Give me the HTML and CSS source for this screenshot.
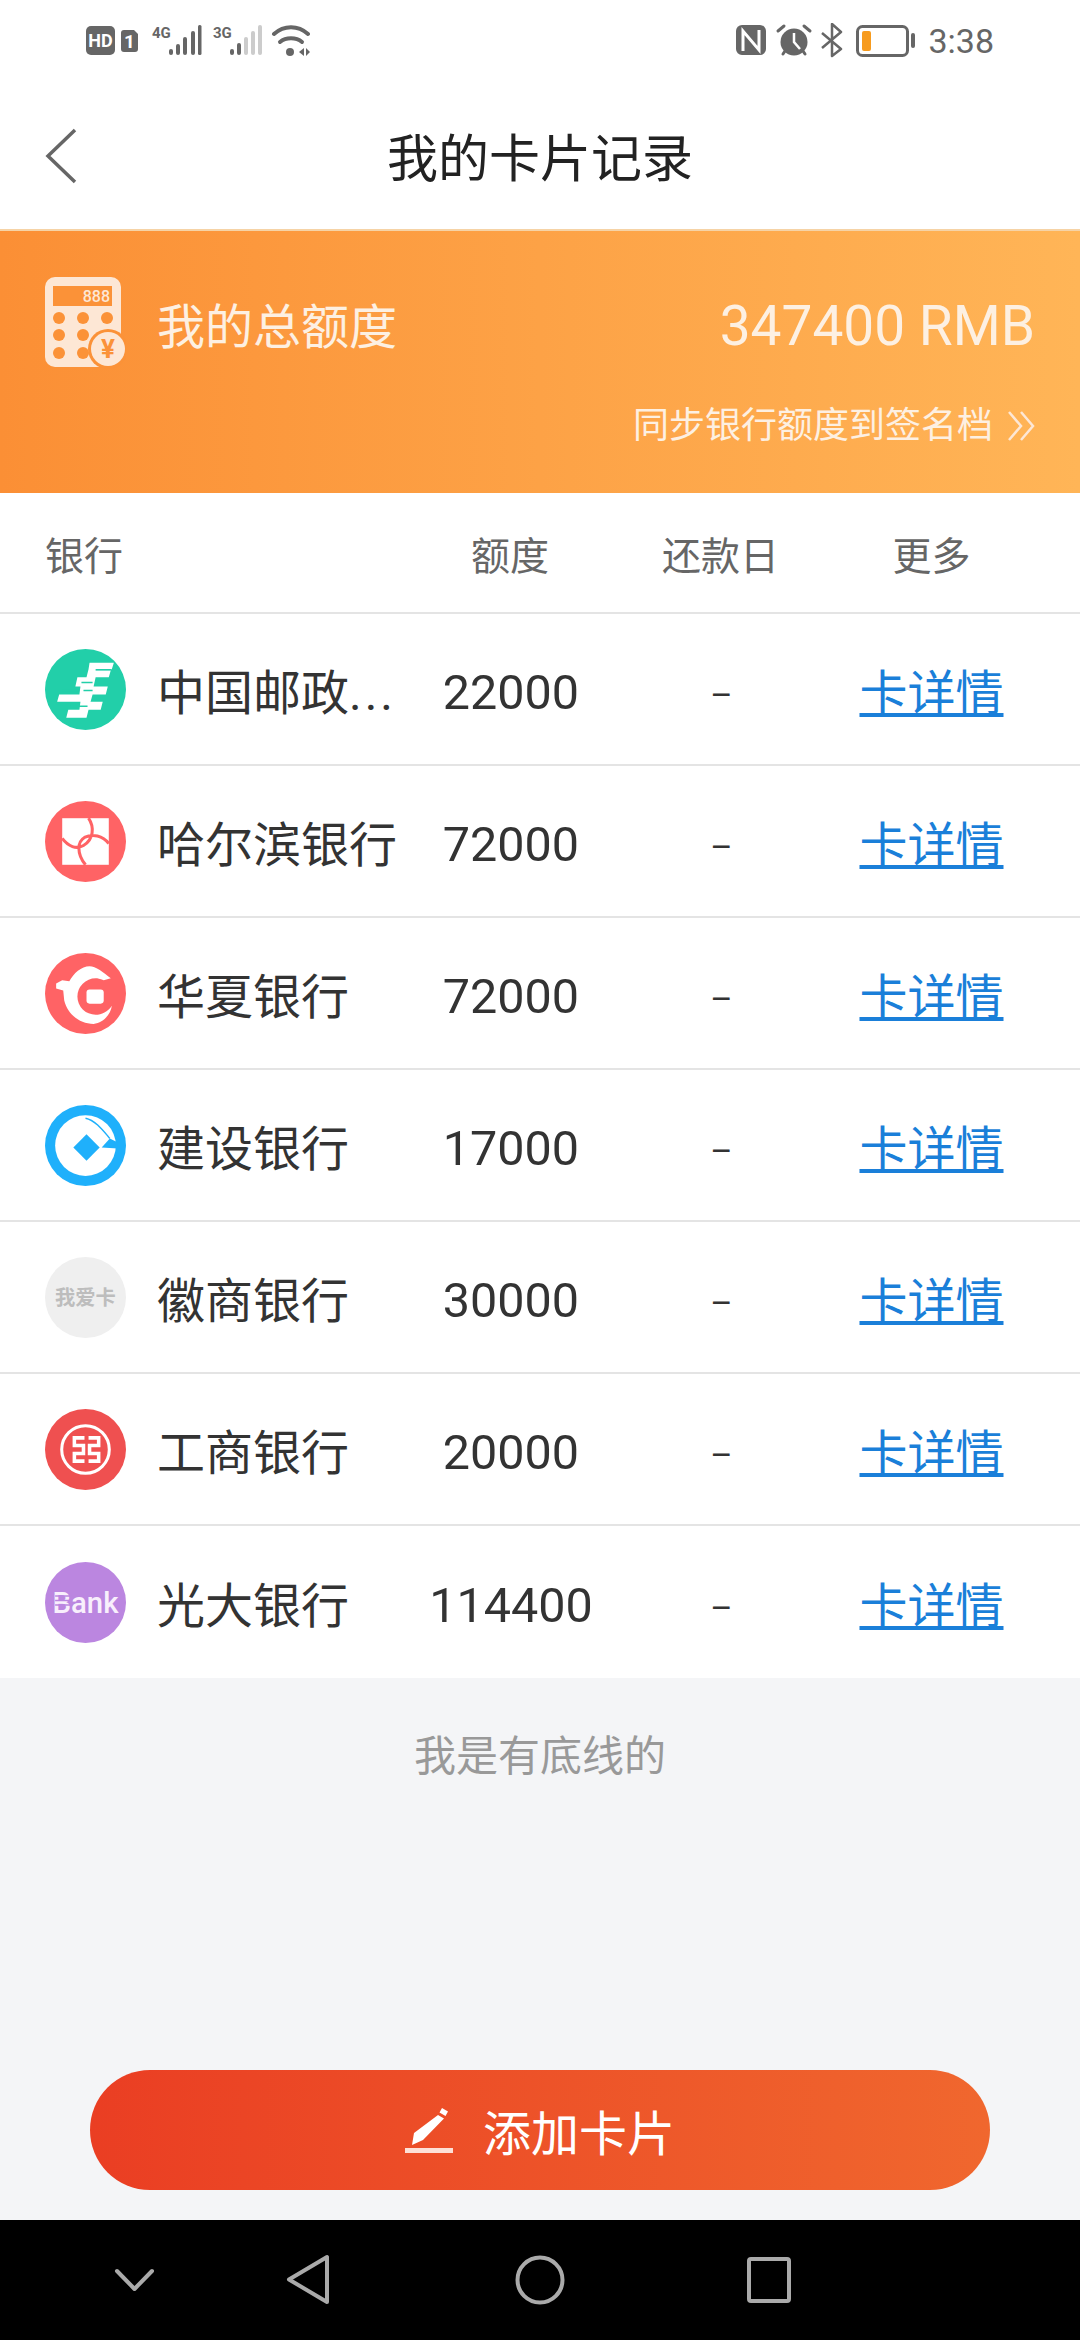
FILE: index.html
```html
<!DOCTYPE html>
<html lang="zh-CN">
<head>
  <meta charset="UTF-8">
  <meta name="viewport" content="width=device-width, initial-scale=1.0">
  <title>我的卡片记录</title>
  <link rel="stylesheet" href="styles.css">
</head>
<body>
  <div class="page">
    <div class="status-bar">
      <svg class="status-left" width="224" height="36" viewBox="86 23 224 36">
        <rect x="86" y="26" width="29" height="29" rx="5" fill="#666"/>
        <text x="100.5" y="46.500" class="st-hd">HD</text>
        <path d="M124 30h10l4 4v15a3 3 0 0 1-3 3h-11a3 3 0 0 1-3-3V33a3 3 0 0 1 3-3z" fill="#666"/>
        <text x="129.5" y="47.500" class="st-one">1</text>
        <text x="152" y="38" class="st-net">4G</text>
        <g fill="#666">
          <rect x="169" y="49" width="4" height="6" rx="2"/>
          <rect x="176" y="44" width="4" height="11" rx="2"/>
          <rect x="183" y="37" width="4" height="18" rx="2"/>
          <rect x="191" y="31" width="4" height="24" rx="2"/>
          <rect x="198" y="25" width="3.500" height="30" rx="1.500"/>
        </g>
        <text x="213" y="38" class="st-net">3G</text>
        <g fill="#666">
          <rect x="230" y="49" width="4" height="6" rx="2"/>
          <rect x="237" y="43" width="4" height="12" rx="2"/>
        </g>
        <g fill="#ccc">
          <rect x="244" y="37" width="4" height="18" rx="2"/>
          <rect x="251" y="31" width="4" height="24" rx="2"/>
          <rect x="258" y="25" width="4" height="30" rx="2"/>
        </g>
        <g fill="none" stroke="#666" stroke-width="4" stroke-linecap="round">
          <path d="M274 34c10-9 24-9 34 0"/>
          <path d="M280 42c6-5 16-5 22 0"/>
        </g>
        <circle cx="290" cy="52" r="4" fill="#666"/>
        <path d="M304 48v8l-5-4zM306 48v8l4-4z" fill="#666"/>
      </svg>
      <div class="status-right">
        <svg width="180" height="36" viewBox="737 23 180 36">
          <rect x="737" y="25" width="30" height="30" rx="6" fill="#666"/>
          <path d="M744 51V31l16 19V30" fill="none" stroke="#fff" stroke-width="3"/>
          <circle cx="795" cy="42" r="13.500" fill="#666"/>
          <path d="M795 33v9l6 7" fill="none" stroke="#fff" stroke-width="2.500"/>
          <path d="M779 31l6-5M811 31l-6-5M784 54l2-3M806 54l-2-3" stroke="#666" stroke-width="3" stroke-linecap="round"/>
          <path d="M823 33l19 16-9 7V24l9 8-19 16" fill="none" stroke="#666" stroke-width="2.500" stroke-linejoin="round"/>
          <rect x="858.500" y="26.500" width="50" height="29" rx="5" fill="#fff" stroke="#666" stroke-width="3"/>
          <rect x="863" y="31" width="9" height="20" rx="2" fill="#f79b1e"/>
          <rect x="912" y="33" width="4" height="15" rx="2" fill="#666"/>
        </svg>
        <span class="status-time">3:38</span>
      </div>
    </div>

    <div class="header">
      <svg class="back" width="32" height="56" viewBox="0 0 32 56">
        <path d="M30 2L3 28l27 26" fill="none" stroke="#666" stroke-width="3.500"/>
      </svg>
      <h1>我的卡片记录</h1>
    </div>

    <div class="banner">
      <div class="banner-top">
        <div class="banner-title">
          <svg width="81" height="92" viewBox="45 276 81 92">
            <rect x="45" y="276" width="76" height="90" rx="10" fill="#fde7d5"/>
            <rect x="53" y="285" width="59" height="20" fill="#fb9238"/>
            <text x="110" y="301" class="calc-num">888</text>
            <g fill="#fb9238">
              <circle cx="59" cy="317" r="6"/><circle cx="83" cy="317" r="6"/><circle cx="107" cy="317" r="6"/>
              <circle cx="59" cy="334" r="6"/><circle cx="83" cy="334" r="6"/>
              <circle cx="59" cy="352" r="6"/><circle cx="83" cy="352" r="6"/>
              <circle cx="108" cy="348" r="20"/>
            </g>
            <circle cx="108" cy="348" r="17" fill="#fde7d5"/>
            <text x="108" y="357" class="calc-yen">¥</text>
          </svg>
          <span>我的总额度</span>
        </div>
        <div class="banner-amount">347400 RMB</div>
      </div>
      <div class="banner-sync">
        <span>同步银行额度到签名档</span>
        <svg width="28" height="32" viewBox="0 0 28 32">
          <path d="M2 2l12 14L2 30M14 2l12 14-12 14" fill="none" stroke="#fde7d5" stroke-width="2.500"/>
        </svg>
      </div>
    </div>

    <div class="list-head">
      <div>银行</div>
      <div class="center">额度</div>
      <div class="center">还款日</div>
      <div class="center">更多</div>
    </div>

    <div class="list">
      <div class="row">
        <div class="bank">
          <svg class="bank-icon" viewBox="0 0 80 80">
            <circle cx="40" cy="40" r="40" fill="#22cfa9"/>
            <path d="M44 13.500H68L66 20H51L50 21H65L63 28H50L48 37H62L60 45H47L45 52H57L55 60H43L41 68H21L23 60H34L35 52H12L14 45H34L35 37H30L32 28H41L43 20z" fill="#fff"/>
            <path d="M50 20.500H65M36 33H47M17 41H33M38 41H47M25 56.500H42" stroke="#22cfa9" stroke-width="1.500"/>
          </svg>
          <span class="bank-name">中国邮政<span class="more">...</span></span>
        </div>
        <div class="center num">22000</div>
        <div class="center dash">–</div>
        <div class="center"><a class="link" href="#">卡详情</a></div>
      </div>

      <div class="row">
        <div class="bank">
          <svg class="bank-icon" viewBox="0 0 80 80">
            <circle cx="40" cy="40" r="40" fill="#ff6365"/>
            <rect x="17" y="17" width="46" height="46" fill="#fff"/>
            <path d="M43 17C49 26 48 38 38 44 31 48 23 45 17 37M63 42C57 34 47 32 39 36 32 40 31 52 40 63" fill="none" stroke="#ff6365" stroke-width="3"/>
          </svg>
          <span class="bank-name">哈尔滨银行</span>
        </div>
        <div class="center num">72000</div>
        <div class="center dash">–</div>
        <div class="center"><a class="link" href="#">卡详情</a></div>
      </div>

      <div class="row">
        <div class="bank">
          <svg class="bank-icon" viewBox="0 0 80 80">
            <circle cx="40" cy="40" r="40" fill="#ff6365"/>
            <path d="M11 30L17 27 24 28C28 20 36 13 44 13 50 13 58 19 65 25L58 27C54 25.500 52 25 50 25A18 18 0 0 0 50 61C56 61 62 58 66 52 65 60 58 69 48 70 34 70 22 60 19 47L18 37 11 35z" fill="#fff"/>
            <rect x="41" y="36" width="17" height="14" rx="3" fill="#fff"/>
          </svg>
          <span class="bank-name">华夏银行</span>
        </div>
        <div class="center num">72000</div>
        <div class="center dash">–</div>
        <div class="center"><a class="link" href="#">卡详情</a></div>
      </div>

      <div class="row">
        <div class="bank">
          <svg class="bank-icon" viewBox="0 0 80 80">
            <circle cx="40" cy="40" r="40" fill="#1fb0fb"/>
            <circle cx="40" cy="40" r="30" fill="#fff"/>
            <path d="M41 29L54 42 41 55 28 42z" fill="#1fb0fb"/>
            <path d="M56 42L64 33 72 37V43z" fill="#1fb0fb"/>
            <path d="M40 13C50 15 58 26 64 33" fill="none" stroke="#1fb0fb" stroke-width="1.500"/>
          </svg>
          <span class="bank-name">建设银行</span>
        </div>
        <div class="center num">17000</div>
        <div class="center dash">–</div>
        <div class="center"><a class="link" href="#">卡详情</a></div>
      </div>

      <div class="row">
        <div class="bank">
          <svg class="bank-icon" viewBox="0 0 80 80">
            <circle cx="40" cy="40" r="40" fill="#efefef"/>
            <text x="40" y="47" class="icon-gray">我爱卡</text>
          </svg>
          <span class="bank-name">徽商银行</span>
        </div>
        <div class="center num">30000</div>
        <div class="center dash">–</div>
        <div class="center"><a class="link" href="#">卡详情</a></div>
      </div>

      <div class="row">
        <div class="bank">
          <svg class="bank-icon" viewBox="0 0 80 80">
            <circle cx="40" cy="40" r="40" fill="#ef5050"/>
            <circle cx="40" cy="40" r="23.500" fill="none" stroke="#fff" stroke-width="3"/>
            <path d="M39 28.500H29V36H38V44H29V51.500H39M43 28.500H53V36H44V44H53V51.500H43" fill="none" stroke="#fff" stroke-width="3.500"/>
          </svg>
          <span class="bank-name">工商银行</span>
        </div>
        <div class="center num">20000</div>
        <div class="center dash">–</div>
        <div class="center"><a class="link" href="#">卡详情</a></div>
      </div>

      <div class="row">
        <div class="bank">
          <svg class="bank-icon" viewBox="0 0 80 80">
            <circle cx="40" cy="40" r="40" fill="#bb86e0"/>
            <text x="40" y="50" class="icon-bank">Bank</text>
            <path d="M10 33.500H27M10 38H27M10 42.500H27" stroke="#bb86e0" stroke-width="1.500"/>
          </svg>
          <span class="bank-name">光大银行</span>
        </div>
        <div class="center num">114400</div>
        <div class="center dash">–</div>
        <div class="center"><a class="link" href="#">卡详情</a></div>
      </div>
    </div>

    <div class="list-end">我是有底线的</div>

    <button class="add-btn">
      <svg width="48" height="46" viewBox="0 0 48 46">
        <path d="M37 1l6 3.500-2.500 4.500-6-3.500zM33 8l6 3.500L18 33l-11 5 2-12z" fill="#fff"/>
        <rect x="0" y="41" width="48" height="5" fill="#fde0d6"/>
      </svg>
      <span>添加卡片</span>
    </button>

    <div class="nav-bar">
      <svg width="1080" height="120" viewBox="0 2220 1080 120">
        <g fill="none" stroke="#aaa" stroke-width="4" stroke-linejoin="round" stroke-linecap="round">
          <path d="M117 2271l17.500 18 17.500-18"/>
          <path d="M327 2257v45l-38-22.500z"/>
          <circle cx="540" cy="2280" r="22.500"/>
          <rect x="749" y="2259" width="40" height="42" rx="2"/>
        </g>
      </svg>
    </div>
  </div>
</body>
</html>
```

FILE: styles.css
```css
body {
  margin: 0;
  font-family: Roboto, "Noto Sans CJK SC", sans-serif;
  color: #333;
  background-color: #f4f5f7;
}

.page {
  display: flex;
  flex-direction: column;
  height: 2340px;
  overflow: hidden;
}

svg {
  display: block;
  flex-shrink: 0;
}

/* 状态栏 */
.status-bar {
  display: flex;
  justify-content: space-between;
  align-items: center;
  height: 80px;
  padding: 2px 86px 0 86px;
  box-sizing: border-box;
  background-color: #fff;
}

.status-right {
  display: flex;
  align-items: center;
  gap: 12px;
}

.status-time {
  font-size: 34px;
  color: #666;
}

.st-hd,
.st-one {
  font-family: Roboto, sans-serif;
  font-weight: 700;
  fill: #fff;
  text-anchor: middle;
}

.st-hd {
  font-size: 18px;
}

.st-one {
  font-size: 19px;
}

.st-net {
  font-family: Roboto, sans-serif;
  font-weight: 700;
  font-size: 15px;
  fill: #666;
}

/* 标题栏 */
.header {
  display: grid;
  grid-template-columns: 1fr auto 1fr;
  align-items: center;
  height: 149px;
  padding: 0 45px;
  background-color: #fff;
}

.header h1 {
  margin: 0;
  font-size: 51px;
  font-weight: 400;
  color: #222;
}

.back {
  margin-top: 3px;
}

/* 总额度 */
.banner {
  height: 264px;
  padding: 46px 45px 0;
  box-sizing: border-box;
  background: linear-gradient(to right, #fb8f35, #ffb557);
  border-top: 2px solid #f6d3a6;
  color: #fdf0e2;
}

.banner-top {
  display: flex;
  justify-content: space-between;
  align-items: center;
}

.banner-title {
  display: flex;
  align-items: center;
  gap: 31px;
  font-size: 48px;
}

.banner-amount {
  padding-top: 6px;
  font-size: 55px;
}

.banner-sync {
  display: flex;
  justify-content: flex-end;
  align-items: center;
  gap: 14px;
  margin-top: 29px;
  font-size: 36px;
  line-height: 56px;
}

/* 列表 */
.list-head,
.row {
  display: grid;
  grid-template-columns: 360px 210px 211px 211px;
  align-items: center;
  padding: 0 43px 0 45px;
  background-color: #fff;
  border-bottom: 2px solid #e4e4e4;
  box-sizing: border-box;
}

.list-head {
  height: 121px;
  font-size: 39px;
  color: #666;
}

.row {
  height: 152px;
  font-size: 48px;
}

.row:last-child {
  border-bottom: none;
}

.center {
  text-align: center;
}

.num {
  padding: 6px 0 0 2px;
  font-size: 48.500px;
}

.dash {
  padding: 11px 0 0 2px;
  font-size: 34px;
}

.bank {
  display: flex;
  align-items: center;
  gap: 31px;
}

.bank-icon {
  width: 81px;
  height: 81px;
}

.bank-name {
  white-space: nowrap;
}

.more {
  letter-spacing: 3px;
}

.link {
  color: #1a7fd9;
  text-decoration: underline;
}

.icon-gray {
  font-family: "Noto Sans CJK SC", sans-serif;
  font-size: 20px;
  font-weight: 700;
  fill: #bdbdbd;
  text-anchor: middle;
}

.icon-bank {
  font-family: Roboto, sans-serif;
  font-size: 29px;
  font-weight: 500;
  fill: #f8effc;
  text-anchor: middle;
}

.calc-num {
  font-family: Roboto, sans-serif;
  font-size: 16px;
  font-weight: 500;
  fill: #fde7d5;
  text-anchor: end;
}

.calc-yen {
  font-family: Roboto, sans-serif;
  font-size: 26px;
  font-weight: 700;
  fill: #fb9238;
  text-anchor: middle;
}

.list-end {
  margin-top: 50px;
  text-align: center;
  font-size: 42px;
  line-height: 58px;
  color: #999;
}

/* 添加按钮 */
.add-btn {
  display: flex;
  justify-content: center;
  align-items: center;
  gap: 30px;
  flex-shrink: 0;
  width: 900px;
  height: 120px;
  margin: auto 90px 30px;
  padding: 0;
  border: none;
  border-radius: 60px;
  background: linear-gradient(to right, #ea3e23, #f0672e);
  color: #fff;
  font-family: inherit;
  font-size: 48px;
}

.nav-bar {
  flex-shrink: 0;
  height: 120px;
  background-color: #000;
}
```
